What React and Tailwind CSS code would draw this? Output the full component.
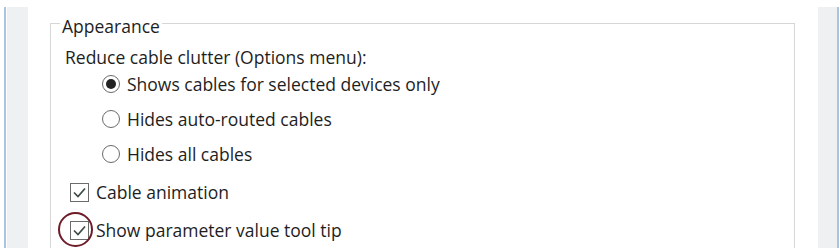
import React from 'react'

function Radio({ checked, label }) {
  return (
    <div className="flex items-center gap-[7px] leading-[24px]">
      <span className="w-[18px] h-[18px] rounded-full border border-[#6b6b6b] bg-white flex items-center justify-center">
        {checked && <span className="w-[10px] h-[10px] rounded-full bg-[#222]" />}
      </span>
      <span>{label}</span>
    </div>
  )
}

function Check({ label, marked }) {
  return (
    <div className="flex items-center gap-[7px] relative leading-[24px]">
      <span className="w-[19px] h-[19px] border border-[#6b6b6b] bg-white flex items-center justify-center">
        <svg width="15" height="15" viewBox="0 0 15 15">
          <path d="M2 7.5 L6 11.5 L13 3.5" fill="none" stroke="#3d4a42" strokeWidth="1.7" />
        </svg>
      </span>
      <span>{label}</span>
      {marked && (
        <span className="absolute left-[-12px] top-[-6px] w-[35px] h-[35px] rounded-full border-2 border-[#6e1c28]" />
      )}
    </div>
  )
}

export default function App() {
  return (
    <div className="w-[840px] h-[248px] bg-white flex overflow-hidden text-[#1e1e1e] text-[17.5px]" style={{ fontFamily: '"Open Sans", "Noto Sans", sans-serif' }}>
      <div className="pt-[7px] pl-[4px] flex">
        <div className="w-[2px] bg-[#a9c3e0]" />
        <div className="w-[21px] bg-[#eef0f2] ml-[1px]" />
      </div>
      <div className="flex-1 pt-[23px] pl-[22px] pr-[23px]">
        <div className="relative border border-[#d6d6d6] border-b-0 h-[240px] pl-[14px] pt-[21px]">
          <span className="absolute left-[9px] top-[-10px] bg-white px-[2px] leading-[24px]">Appearance</span>
          <div className="leading-[24px]">Reduce cable clutter (Options menu):</div>
          <div className="pl-[37px] flex flex-col gap-[11px] mt-[3px]">
            <Radio checked label="Shows cables for selected devices only" />
            <Radio label="Hides auto-routed cables" />
            <Radio label="Hides all cables" />
          </div>
          <div className="pl-[5px] flex flex-col gap-[14px] mt-[14px]">
            <Check label="Cable animation" />
            <Check label="Show parameter value tool tip" marked />
          </div>
        </div>
      </div>
      <div className="pt-[7px] flex">
        <div className="w-[19px] bg-[#eef0f2]" />
        <div className="w-[2px] bg-[#a9c3e0] mr-[1px]" />
      </div>
    </div>
  )
}
